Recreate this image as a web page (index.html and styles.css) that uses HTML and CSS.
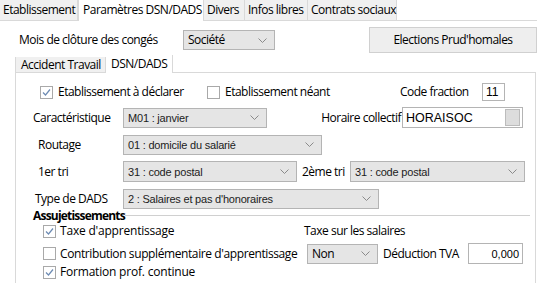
FILE: index.html
```html
<!DOCTYPE html>
<html>

<head>
    <meta charset="utf-8">
    <link rel="stylesheet" href="styles.css">
</head>

<body>

    <div class="tabbar">
        <div class="tab tab-etab">Etablissement</div>
        <div class="tab tab-active tab-param">Paramètres DSN/DADS</div>
        <div class="tab tab-divers">Divers</div>
        <div class="tab tab-infos">Infos libres</div>
        <div class="tab tab-contrats">Contrats sociaux</div>
        <div class="tab-fill"></div>
    </div>

    <div class="top-row">
        <span class="lbl-mois">Mois de clôture des congés</span>
        <div class="combo combo-societe">
            <span class="combo-text ui">Société</span>
            <svg class="arrow" width="9" height="5" viewBox="0 0 9 5"><path d="M0.5 0.5 L4.5 4.5 L8.5 0.5" /></svg>
        </div>
        <div class="btn-elections">Elections Prud'homales</div>
    </div>

    <div class="subtabs">
        <div class="subtab subtab-accident">Accident Travail</div>
        <div class="subtab subtab-active subtab-dsn">DSN/DADS</div>
        <div class="tab-fill"></div>
    </div>

    <div class="panel">

        <div class="row row-1">
            <div class="check-cell cell-declarer">
                <span class="cb checked"><svg width="11" height="11" viewBox="0 0 11 11"><path d="M2 5.5 L4.5 8 L9 2.5" /></svg></span>
                <span>Etablissement à déclarer</span>
            </div>
            <div class="check-cell cell-neant">
                <span class="cb"></span>
                <span>Etablissement néant</span>
            </div>
            <span class="lbl lbl-fraction">Code fraction</span>
            <div class="edit edit-fraction">11</div>
        </div>

        <div class="row row-2">
            <span class="lbl lbl-caract">Caractéristique</span>
            <div class="combo combo-caract">
                <span class="combo-text">M01 : janvier</span>
                <svg class="arrow" width="9" height="5" viewBox="0 0 9 5"><path d="M0.5 0.5 L4.5 4.5 L8.5 0.5" /></svg>
            </div>
            <span class="lbl lbl-horaire">Horaire collectif</span>
            <div class="edit edit-horaire">
                <span>HORAISOC</span>
                <span class="edit-btn"></span>
            </div>
        </div>

        <div class="row row-3">
            <span class="lbl lbl-routage">Routage</span>
            <div class="combo combo-routage">
                <span class="combo-text">01 : domicile du salarié</span>
                <svg class="arrow" width="9" height="5" viewBox="0 0 9 5"><path d="M0.5 0.5 L4.5 4.5 L8.5 0.5" /></svg>
            </div>
        </div>

        <div class="row row-4">
            <span class="lbl lbl-tri1">1er tri</span>
            <div class="combo combo-tri1">
                <span class="combo-text">31 : code postal</span>
                <svg class="arrow" width="9" height="5" viewBox="0 0 9 5"><path d="M0.5 0.5 L4.5 4.5 L8.5 0.5" /></svg>
            </div>
            <span class="lbl lbl-tri2">2ème tri</span>
            <div class="combo combo-tri2">
                <span class="combo-text">31 : code postal</span>
                <svg class="arrow" width="9" height="5" viewBox="0 0 9 5"><path d="M0.5 0.5 L4.5 4.5 L8.5 0.5" /></svg>
            </div>
        </div>

        <div class="row row-5">
            <span class="lbl lbl-type">Type de DADS</span>
            <div class="combo combo-type">
                <span class="combo-text">2 : Salaires et pas d'honoraires</span>
                <svg class="arrow" width="9" height="5" viewBox="0 0 9 5"><path d="M0.5 0.5 L4.5 4.5 L8.5 0.5" /></svg>
            </div>
        </div>

        <div class="group-title">
            <span class="group-text">Assujetissements</span>
            <span class="group-line"></span>
        </div>

        <div class="row row-a">
            <div class="check-cell cell-taxe">
                <span class="cb checked"><svg width="11" height="11" viewBox="0 0 11 11"><path d="M2 5.5 L4.5 8 L9 2.5" /></svg></span>
                <span class="wide">Taxe d'apprentissage</span>
            </div>
            <span class="lbl lbl-salaires">Taxe sur les salaires</span>
        </div>

        <div class="row row-b">
            <div class="check-cell cell-contrib">
                <span class="cb"></span>
                <span class="wide tight">Contribution supplémentaire d'apprentissage</span>
            </div>
            <div class="combo combo-non">
                <span class="combo-text ui">Non</span>
                <svg class="arrow" width="9" height="5" viewBox="0 0 9 5"><path d="M0.5 0.5 L4.5 4.5 L8.5 0.5" /></svg>
            </div>
            <span class="lbl lbl-tva">Déduction TVA</span>
            <div class="edit edit-tva">0,000</div>
        </div>

        <div class="row row-c">
            <div class="check-cell">
                <span class="cb checked"><svg width="11" height="11" viewBox="0 0 11 11"><path d="M2 5.5 L4.5 8 L9 2.5" /></svg></span>
                <span class="wide">Formation prof. continue</span>
            </div>
        </div>

    </div>

</body>

</html>
```

FILE: styles.css
```css
body {
    margin: 0;
    padding: 0;
    width: 537px;
    height: 283px;
    overflow: hidden;
    background-color: white;
    color: black;
    font-family: "Open Sans", "Noto Sans", sans-serif;
    font-size: 12px;
    line-height: 16px;
    letter-spacing: -0.5px;
}

/* top tabs */

.tabbar {
    display: flex;
    height: 21px;
}

.tab {
    box-sizing: border-box;
    height: 21px;
    line-height: 19px;
    padding-left: 3px;
    background-color: #f0f0f0;
    border-right: 1px solid #d9d9d9;
    border-bottom: 1px solid #d9d9d9;
    white-space: nowrap;
}

.tab-active {
    background-color: white;
    border-left: 1px solid #d9d9d9;
    border-bottom: none;
    padding-left: 4px;
}

.tab-etab { width: 78px; }
.tab-param { width: 126px; }
.tab-divers { width: 41px; }
.tab-infos { width: 63px; }
.tab-contrats { width: 89px; }

.tab-fill {
    flex: 1;
    border-bottom: 1px solid #d9d9d9;
}

/* top row */

.top-row {
    display: flex;
    align-items: center;
    height: 26px;
    margin-top: 6px;
    padding-left: 19px;
}

.lbl-mois {
    width: 164px;
}

.combo {
    box-sizing: border-box;
    display: flex;
    flex-shrink: 0;
    align-items: center;
    justify-content: space-between;
    height: 20px;
    padding: 0 7px 0 4px;
    background-color: #e5e5e5;
    border: 1px solid #b4b4b4;
    color: #1c1c1c;
    font-family: "Liberation Sans", Arial, sans-serif;
    font-size: 11px;
    letter-spacing: -0.2px;
    white-space: nowrap;
}

.combo-text.ui {
    color: black;
    font-family: "Open Sans", "Noto Sans", sans-serif;
    font-size: 12px;
    letter-spacing: -0.5px;
}

.arrow path {
    fill: none;
    stroke: #8a8a8a;
    stroke-width: 1;
}

.combo-societe {
    width: 92px;
}

.btn-elections {
    box-sizing: border-box;
    width: 168px;
    height: 26px;
    margin-left: auto;
    line-height: 24px;
    text-align: center;
    background-color: #eeeeee;
    border: 1px solid #d0d0d0;
}

/* sub tabs */

.subtabs {
    display: flex;
    align-items: flex-end;
    height: 18px;
    margin-top: 2px;
    padding-left: 15px;
}

.subtab {
    box-sizing: border-box;
    white-space: nowrap;
}

.subtab-accident {
    width: 91px;
    height: 16px;
    line-height: 15px;
    padding-left: 5px;
    background-color: #f0f0f0;
    border-left: 1px solid #d9d9d9;
    border-right: 1px solid #d9d9d9;
    border-bottom: 1px solid #d9d9d9;
}

.subtab-dsn {
    width: 67px;
    height: 18px;
    line-height: 17px;
    padding-left: 5px;
    background-color: white;
    border-right: 1px solid #d9d9d9;
}

.subtabs .tab-fill {
    height: 18px;
    box-sizing: border-box;
    margin-right: 1px;
    border-bottom: 1px solid #d9d9d9;
}

/* panel */

.panel {
    box-sizing: border-box;
    width: 521px;
    height: 240px;
    margin-left: 15px;
    padding-top: 10px;
    border-left: 1px solid #d9d9d9;
    border-right: 1px solid #d9d9d9;
}

.row {
    display: flex;
    align-items: center;
    height: 21px;
    margin-top: 6px;
    white-space: nowrap;
}

.row-1 {
    height: 18px;
    margin-top: 0;
    padding-left: 24px;
}

.check-cell {
    display: flex;
    flex-shrink: 0;
    align-items: center;
}

.cb {
    box-sizing: border-box;
    display: inline-flex;
    flex-shrink: 0;
    align-items: center;
    justify-content: center;
    width: 13px;
    height: 13px;
    margin-right: 4px;
    background-color: white;
    border: 1px solid #a9a9a9;
}

.cb svg path {
    fill: none;
    stroke: #6d8bb3;
    stroke-width: 1.2;
}

.cell-declarer { width: 167px; }
.cell-neant { width: 193px; }
.cell-declarer .cb,
.cell-neant .cb { margin-right: 5px; }

.lbl-fraction { width: 82px; }

.edit {
    box-sizing: border-box;
    display: flex;
    flex-shrink: 0;
    align-items: center;
    background-color: white;
    border: 1px solid #b4b4b4;
    font-family: "Liberation Sans", Arial, sans-serif;
    letter-spacing: 0;
}

.edit-fraction {
    width: 23px;
    height: 18px;
    padding-left: 3px;
    font-size: 12px;
}

.row-2 { padding-left: 17px; }
.lbl-caract { width: 90px; }
.combo-caract { width: 144px; }

.lbl-horaire {
    box-sizing: border-box;
    width: 135px;
    padding-right: 1px;
    text-align: right;
}

.edit-horaire {
    width: 121px;
    height: 21px;
    padding-left: 3px;
    justify-content: space-between;
    font-size: 12.5px;
}

.edit-btn {
    width: 13px;
    height: 15px;
    margin-right: 2px;
    background-color: #dddddd;
    border: 1px solid #bcbcbc;
}

.row-3 { padding-left: 22px; }
.lbl-routage { width: 85px; }
.combo-routage { width: 199px; }

.row-4 { padding-left: 22px; }
.lbl-tri1 { width: 85px; }
.combo-tri1 { width: 174px; height: 21px; }

.lbl-tri2 {
    box-sizing: border-box;
    width: 53px;
    padding-left: 5px;
}

.combo-tri2 { width: 175px; height: 21px; }

.row-5 { padding-left: 19px; }
.lbl-type { width: 88px; }
.combo-type { width: 256px; }

/* group */

.group-title {
    display: flex;
    align-items: center;
    height: 13px;
    margin-top: 0;
    padding-left: 17px;
    padding-right: 5px;
    line-height: 13px;
}

.group-text {
    width: 92px;
    font-weight: bold;
    letter-spacing: -0.8px;
}

.group-line {
    flex: 1;
    height: 0;
    border-top: 1px solid #d0d0d0;
}

.row-a {
    align-items: flex-start;
    height: 14px;
    margin-top: 2px;
    padding-left: 27px;
    line-height: 14px;
}

.row-a .check-cell { height: 14px; }

.cell-taxe { width: 261px; }

.row-b {
    height: 21px;
    margin-top: 5px;
    padding-left: 27px;
}

.cell-contrib { width: 264px; }
.combo-non { width: 71px; }

.lbl-tva {
    box-sizing: border-box;
    width: 90px;
    padding-left: 5px;
}

.edit-tva {
    width: 55px;
    height: 21px;
    justify-content: flex-end;
    padding-right: 3px;
    font-size: 11px;
}

.row-c {
    height: 16px;
    margin-top: 0;
    padding-left: 27px;
}

.wide {
    letter-spacing: -0.2px;
}

.wide.tight {
    letter-spacing: -0.4px;
}
```
